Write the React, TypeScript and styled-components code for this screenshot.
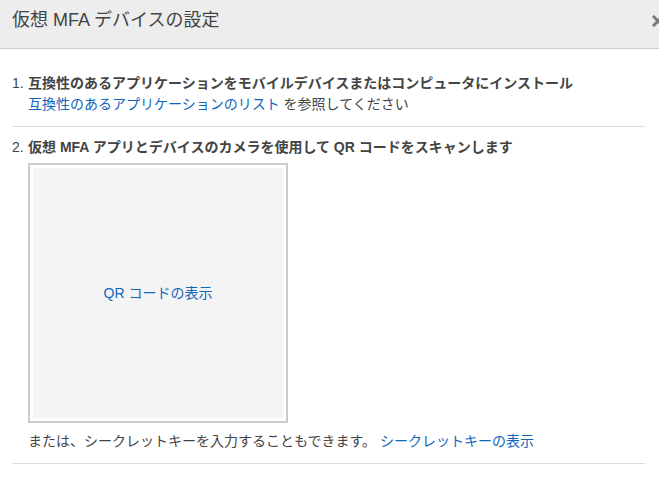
import styled, { createGlobalStyle } from "styled-components";

const GlobalStyle = createGlobalStyle`
  html, body {
    margin: 0;
    padding: 0;
    background: #ffffff;
    overflow: hidden;
  }
  body {
    font-family: "Liberation Sans", "Noto Sans CJK JP", sans-serif;
    color: #444444;
  }
`;

const Dialog = styled.div`
  width: 680px;
  background: #ffffff;
`;

const Header = styled.div`
  display: flex;
  align-items: center;
  justify-content: space-between;
  height: 48px;
  padding: 0 16px 0 12px;
  background: #ededed;
  border-bottom: 1px solid #cccccc;
`;

const Title = styled.h1`
  margin: 0;
  font-size: 18px;
  font-weight: normal;
  line-height: 24px;
  color: #444444;
  padding-bottom: 8px;
`;

const Close = styled.button`
  display: flex;
  align-items: center;
  justify-content: center;
  width: 12px;
  height: 12px;
  margin-bottom: 6px;
  padding: 0;
  border: none;
  background: none;
  cursor: pointer;
`;

const Body = styled.div`
  padding: 14px 35px 0 12px;
`;

const Steps = styled.ol`
  list-style: none;
  margin: 0;
  padding: 0;
`;

const Step = styled.li`
  display: flex;
  padding: 10px 0 11px;
  border-bottom: 1px solid #dddddd;
  font-size: 14px;
  line-height: 21px;
`;

const Num = styled.span`
  flex: 0 0 16px;
`;

const Content = styled.div`
  display: flex;
  flex-direction: column;
  align-items: flex-start;
`;

const Heading = styled.div`
  font-weight: bold;
`;

const Link = styled.a`
  color: #1166bb;
  text-decoration: none;
  cursor: pointer;
`;

const QrFrame = styled.div`
  width: 250px;
  height: 250px;
  margin: 5px 0 8px;
  padding: 3px;
  border: 2px solid #cccccc;
  background: #ffffff;
`;

const QrInner = styled.div`
  display: flex;
  align-items: center;
  justify-content: center;
  width: 100%;
  height: 100%;
  background: #f4f4f4;
`;

function CloseIcon() {
  return (
    <svg width="12" height="12" viewBox="0 0 12 12">
      <path
        d="M2 2 L10 10 M10 2 L2 10"
        stroke="#777777"
        strokeWidth="3"
        strokeLinecap="square"
      />
    </svg>
  );
}

export default function App() {
  return (
    <>
      <GlobalStyle />
      <Dialog>
        <Header>
          <Title>仮想 MFA デバイスの設定</Title>
          <Close aria-label="閉じる">
            <CloseIcon />
          </Close>
        </Header>
        <Body>
          <Steps>
            <Step>
              <Num>1.</Num>
              <Content>
                <Heading>
                  互換性のあるアプリケーションをモバイルデバイスまたはコンピュータにインストール
                </Heading>
                <div>
                  <Link>互換性のあるアプリケーションのリスト</Link> を参照してください
                </div>
              </Content>
            </Step>
            <Step>
              <Num>2.</Num>
              <Content>
                <Heading>
                  仮想 MFA アプリとデバイスのカメラを使用して QR コードをスキャンします
                </Heading>
                <QrFrame>
                  <QrInner>
                    <Link>QR コードの表示</Link>
                  </QrInner>
                </QrFrame>
                <div>
                  または、シークレットキーを入力することもできます。{" "}
                  <Link>シークレットキーの表示</Link>
                </div>
              </Content>
            </Step>
          </Steps>
        </Body>
      </Dialog>
    </>
  );
}
